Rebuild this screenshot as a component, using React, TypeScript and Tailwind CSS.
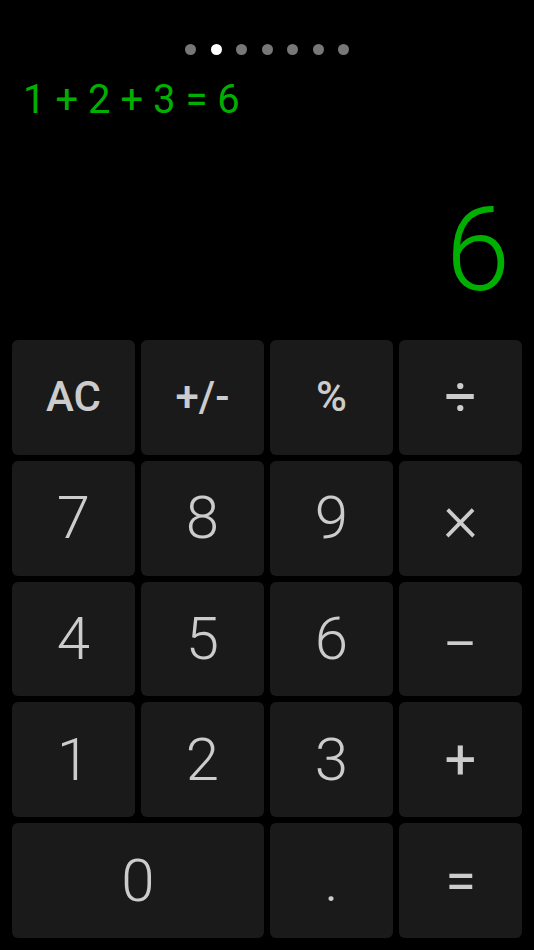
import React from "react";

type Key = { label: string; cls: string; span?: number; inner?: string };

const NUM = "text-[60px] font-light";
const FN = "text-[42px] font-medium";

const keys: Key[] = [
  { label: "AC", cls: FN },
  { label: "+/-", cls: FN },
  { label: "%", cls: FN },
  { label: "÷", cls: "text-[56px] font-normal" },
  { label: "7", cls: NUM },
  { label: "8", cls: NUM },
  { label: "9", cls: NUM },
  { label: "×", cls: "text-[68px] font-light" },
  { label: "4", cls: NUM },
  { label: "5", cls: NUM },
  { label: "6", cls: NUM },
  { label: "-", cls: "text-[72px] font-light", inner: "inline-block scale-x-150 translate-y-[3px]" },
  { label: "1", cls: NUM },
  { label: "2", cls: NUM },
  { label: "3", cls: NUM },
  { label: "+", cls: "text-[56px] font-normal" },
  { label: "0", cls: NUM, span: 2 },
  { label: ".", cls: NUM },
  { label: "=", cls: "text-[56px] font-normal" },
];

function KeyButton({ k }: { k: Key }) {
  return (
    <div
      className={`${k.span === 2 ? "col-span-2" : ""} flex items-center justify-center rounded-[6px] bg-[#1a1a1a] text-[#cccccc] leading-none ${k.cls}`}
    >
      <span className={k.inner ?? ""}>{k.label}</span>
    </div>
  );
}

export default function App() {
  return (
    <div
      className="w-full h-[950px] bg-black flex flex-col overflow-hidden"
      style={{ fontFamily: "Roboto, 'Liberation Sans', sans-serif" }}
    >
      <div className="h-[340px] flex flex-col">
        <div className="mt-[44px] flex justify-center gap-[14.5px]">
          {[0, 1, 2, 3, 4, 5, 6].map((i) => (
            <div
              key={i}
              className={`w-[11px] h-[11px] rounded-full ${i === 1 ? "bg-white" : "bg-[#777777]"}`}
            />
          ))}
        </div>
        <div className="mt-[25px] pl-[23px] text-[40px] leading-none text-[#00b000] whitespace-pre">
          1 + 2 + 3 = 6
        </div>
        <div className="mt-[72px] pr-[24px] text-right text-[116px] font-light leading-none text-[#00b000]">
          6
        </div>
      </div>
      <div className="flex-1 grid grid-cols-4 grid-rows-5 gap-[6px] px-3 pb-3">
        {keys.map((k) => (
          <KeyButton key={k.label} k={k} />
        ))}
      </div>
    </div>
  );
}
